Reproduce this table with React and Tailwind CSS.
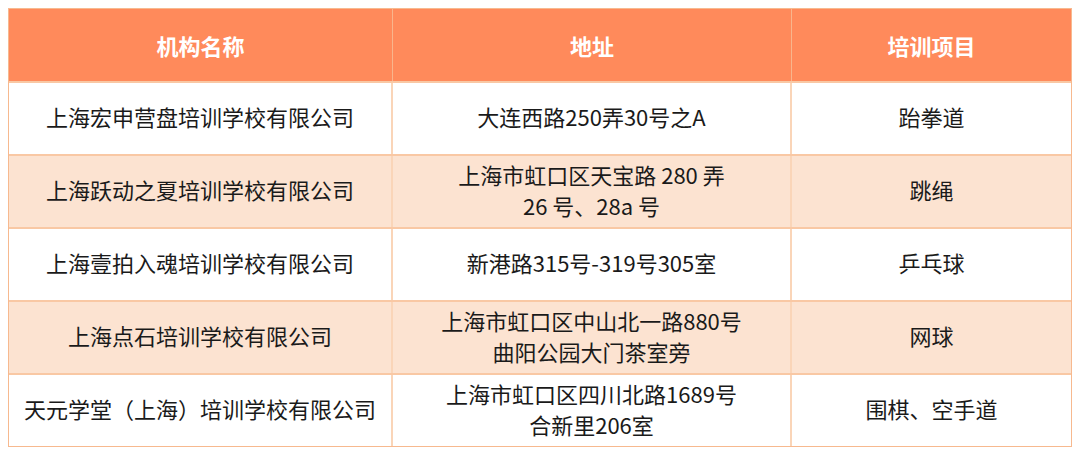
import React from 'react';

const rows = [
  { name: '上海宏申营盘培训学校有限公司', addr: ['大连西路250弄30号之A'], item: '跆拳道' },
  { name: '上海跃动之夏培训学校有限公司', addr: ['上海市虹口区天宝路 280 弄', '26 号、28a 号'], item: '跳绳' },
  { name: '上海壹拍入魂培训学校有限公司', addr: ['新港路315号-319号305室'], item: '乒乓球' },
  { name: '上海点石培训学校有限公司', addr: ['上海市虹口区中山北一路880号', '曲阳公园大门茶室旁'], item: '网球' },
  { name: '天元学堂（上海）培训学校有限公司', addr: ['上海市虹口区四川北路1689号', '合新里206室'], item: '围棋、空手道' },
];

const App = () => {
  return (
    <div className="w-[1080px] h-[454px] bg-white p-2" style={{ fontFamily: '"Noto Sans CJK SC", "Noto Sans", sans-serif' }}>
      <div className="w-[1064px] border border-[#f7b98f] text-[22px] leading-[31px] text-[#1a1a1a]">
        {/* Header */}
        <div className="grid grid-cols-[384px_399px_1fr] h-[72px] bg-[#ff8a5b] text-white font-bold">
          <div className="flex items-center justify-center border-r border-[#f9b58c]">机构名称</div>
          <div className="flex items-center justify-center border-r border-[#f9b58c]">地址</div>
          <div className="flex items-center justify-center">培训项目</div>
        </div>

        {rows.map((r, i) => (
          <div
            key={i}
            className={`grid grid-cols-[384px_399px_1fr] h-[73px] border-t-2 border-[#f9c8a4] ${i % 2 === 1 ? 'bg-[#fce3d1]' : 'bg-white'}`}
          >
            <div className="flex items-center justify-center border-r-2 border-[#fad5b8] pb-1">{r.name}</div>
            <div className="flex flex-col items-center justify-center border-r-2 border-[#fad5b8] pb-1">
              {r.addr.map((line, j) => (
                <span key={j}>{line}</span>
              ))}
            </div>
            <div className="flex items-center justify-center pb-1">{r.item}</div>
          </div>
        ))}
      </div>
    </div>
  );
};

export default App;
